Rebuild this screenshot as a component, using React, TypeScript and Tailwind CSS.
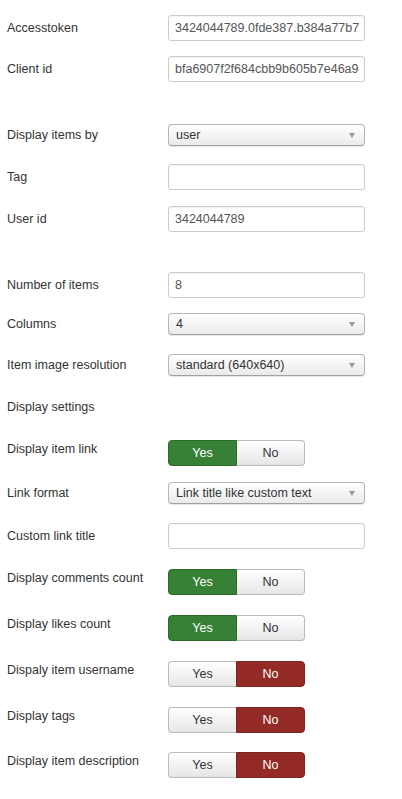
import React from 'react';

type Row =
  | { kind: 'input'; label: string; value?: string; mb: string }
  | { kind: 'select'; label: string; value: string; mb: string }
  | { kind: 'toggle'; label: string; on: boolean; mb: string }
  | { kind: 'heading'; label: string; mb: string };

const rows: Row[] = [
  { kind: 'input', label: 'Accesstoken', value: '3424044789.0fde387.b384a77b7', mb: 'mb-[15px]' },
  { kind: 'input', label: 'Client id', value: 'bfa6907f2f684cbb9b605b7e46a9', mb: 'mb-[42px]' },
  { kind: 'select', label: 'Display items by', value: 'user', mb: 'mb-[18px]' },
  { kind: 'input', label: 'Tag', value: '', mb: 'mb-[16px]' },
  { kind: 'input', label: 'User id', value: '3424044789', mb: 'mb-[40px]' },
  { kind: 'input', label: 'Number of items', value: '8', mb: 'mb-[15px]' },
  { kind: 'select', label: 'Columns', value: '4', mb: 'mb-[19px]' },
  { kind: 'select', label: 'Item image resolution', value: 'standard (640x640)', mb: 'mb-[22px]' },
  { kind: 'heading', label: 'Display settings', mb: 'mb-[24px]' },
  { kind: 'toggle', label: 'Display item link', on: true, mb: 'mb-[16px]' },
  { kind: 'select', label: 'Link format', value: 'Link title like custom text', mb: 'mb-[19px]' },
  { kind: 'input', label: 'Custom link title', value: '', mb: 'mb-[20px]' },
  { kind: 'toggle', label: 'Display comments count', on: true, mb: 'mb-[20px]' },
  { kind: 'toggle', label: 'Display likes count', on: true, mb: 'mb-[20px]' },
  { kind: 'toggle', label: 'Dispaly item username', on: false, mb: 'mb-[20px]' },
  { kind: 'toggle', label: 'Display tags', on: false, mb: 'mb-[19px]' },
  { kind: 'toggle', label: 'Display item description', on: false, mb: 'mb-[19px]' },
];

const Label = ({ text, top }: { text: string; top?: boolean }) => (
  <div className={`w-[161px] shrink-0 text-[#333] leading-[18px] ${top ? 'self-start' : ''}`}>{text}</div>
);

const Toggle = ({ on }: { on: boolean }) => (
  <div className="flex h-[26px] w-[137px] text-[12.5px]">
    <div
      className={`flex-1 flex items-center justify-center rounded-l-[4px] border ${
        on
          ? 'bg-[#378137] border-[#2b6a2b] text-white'
          : 'bg-gradient-to-b from-white to-[#e6e6e6] border-[#bbb] border-r-0 text-[#333]'
      }`}
    >
      Yes
    </div>
    <div
      className={`flex-1 flex items-center justify-center rounded-r-[4px] border ${
        !on
          ? 'bg-[#942a25] border-[#7d2420] text-white'
          : 'bg-gradient-to-b from-white to-[#e6e6e6] border-[#bbb] border-l-0 text-[#333]'
      }`}
    >
      No
    </div>
  </div>
);

export default function App() {
  return (
    <div
      className="w-[402px] h-[799px] bg-white pt-[15px] pl-[7px] text-[12.5px] overflow-hidden"
      style={{ fontFamily: '"Liberation Sans", Arial, sans-serif' }}
    >
      {rows.map((r, i) => {
        if (r.kind === 'heading') {
          return (
            <div key={i} className={`h-[18px] flex items-center ${r.mb}`}>
              <Label text={r.label} />
            </div>
          );
        }
        if (r.kind === 'input') {
          return (
            <div key={i} className={`flex items-center h-[26px] ${r.mb}`}>
              <Label text={r.label} />
              <div className="w-[197px] h-[26px] border border-[#ccc] rounded-[3px] bg-white px-[6px] flex items-center text-[#555] overflow-hidden whitespace-nowrap shadow-[inset_0_1px_1px_rgba(0,0,0,0.05)]">
                {r.value}
              </div>
            </div>
          );
        }
        if (r.kind === 'select') {
          return (
            <div key={i} className={`flex items-center h-[22px] ${r.mb}`}>
              <Label text={r.label} />
              <div className="w-[197px] h-[22px] border border-[#b5b5b5] border-b-[#a0a0a0] rounded-[4px] bg-gradient-to-b from-white to-[#eaeaea] pl-[7px] pr-[9px] flex items-center justify-between text-[#333] shadow-[0_1px_1px_rgba(0,0,0,0.1)]">
                <span className="whitespace-nowrap">{r.value}</span>
                <span className="w-0 h-0 border-l-[3.5px] border-r-[3.5px] border-t-[5px] border-l-transparent border-r-transparent border-t-[#999]" />
              </div>
            </div>
          );
        }
        return (
          <div key={i} className={`flex items-start h-[26px] ${r.mb}`}>
            <Label text={r.label} top />
            <Toggle on={r.on} />
          </div>
        );
      })}
    </div>
  );
}
